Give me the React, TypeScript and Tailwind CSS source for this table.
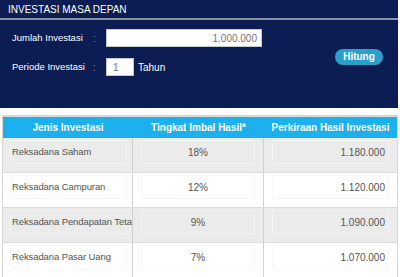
import React from "react";

const rows = [
  { jenis: "Reksadana Saham", imbal: "18%", hasil: "1.180.000" },
  { jenis: "Reksadana Campuran", imbal: "12%", hasil: "1.120.000" },
  { jenis: "Reksadana Pendapatan Teta", imbal: "9%", hasil: "1.090.000" },
  { jenis: "Reksadana Pasar Uang", imbal: "7%", hasil: "1.070.000" },
];

const font = { fontFamily: '"Liberation Sans", Tahoma, Arial, sans-serif' };

export default function App() {
  return (
    <div className="w-[400px] h-[277px] overflow-hidden bg-white" style={font}>
      {/* Form panel */}
      <div className="w-[398px] h-[108px] bg-[#0b1d52] flex flex-col">
        <div className="h-[20px] px-2 flex items-center text-[10px] text-white border-b-2 border-[#8a93a8]">
          INVESTASI MASA DEPAN
        </div>
        <div className="flex pt-[9px] pr-[15px]">
          <div className="flex-1 flex flex-col gap-[11px]">
            <div className="flex items-center h-[18px]">
              <span className="w-[93px] pl-3 text-[9.5px] text-white whitespace-nowrap">Jumlah Investasi</span>
              <span className="w-[13px] text-[10px] text-[#6f8bb8]">:</span>
              <div className="w-[156px] h-[18px] bg-white border border-[#c8c8c8] flex items-center justify-end pr-1 text-[10px] text-[#777]">
                1.000.000
              </div>
            </div>
            <div className="flex items-center h-[18px]">
              <span className="w-[93px] pl-3 text-[9.5px] text-white whitespace-nowrap">Periode Investasi</span>
              <span className="w-[13px] text-[10px] text-[#6f8bb8]">:</span>
              <div className="w-[28px] h-[18px] bg-white border border-[#c8c8c8] flex items-center pl-[6px] text-[10px] text-[#777]">
                1
              </div>
              <span className="ml-[4px] text-[10px] text-white">Tahun</span>
            </div>
          </div>
          <div className="pt-[14px]">
            <button className="w-[48px] h-[16px] rounded-full bg-[#2a9fcb] text-white text-[10px] font-bold leading-none">
              Hitung
            </button>
          </div>
        </div>
      </div>

      {/* Result table */}
      <div className="mt-[7px] mx-[2px] w-[396px] border-t-2 border-l border-r border-[#d9d9d9]">
        <div className="grid grid-cols-[130px_131px_1fr] h-[21px] bg-[#1eb0ee] text-white text-[10px] font-bold">
          <div className="flex items-center justify-center">Jenis Investasi</div>
          <div className="flex items-center justify-center">Tingkat Imbal Hasil*</div>
          <div className="flex items-center justify-center">Perkiraan Hasil Investasi</div>
        </div>
        {rows.map((r, i) => {
          const gray = i % 2 === 0;
          const bg = gray ? "bg-[#ebebeb]" : "bg-white";
          const box = gray ? "border-[#f3f3f3]" : "border-[#f6f6f6]";
          return (
            <div
              key={r.jenis}
              className={`grid grid-cols-[130px_131px_1fr] h-[35px] border-b border-[#dcdcdc] text-[10px] text-[#555] ${bg}`}
            >
              <div className="pl-[7px] pr-[5px] pt-[2px] border-r border-[#d0d0d0]">
                <div className={`h-[24px] border ${box} flex items-center pl-[1px] whitespace-nowrap text-[9.5px] tracking-[-0.1px]`}>
                  {r.jenis}
                </div>
              </div>
              <div className="px-[8px] pt-[2px] border-r border-[#d0d0d0]">
                <div className={`h-[24px] border ${box} flex items-center justify-center`}>{r.imbal}</div>
              </div>
              <div className="px-[8px] pt-[2px]">
                <div className={`h-[24px] border ${box} flex items-center justify-end pr-[3px]`}>{r.hasil}</div>
              </div>
            </div>
          );
        })}
      </div>
    </div>
  );
}
